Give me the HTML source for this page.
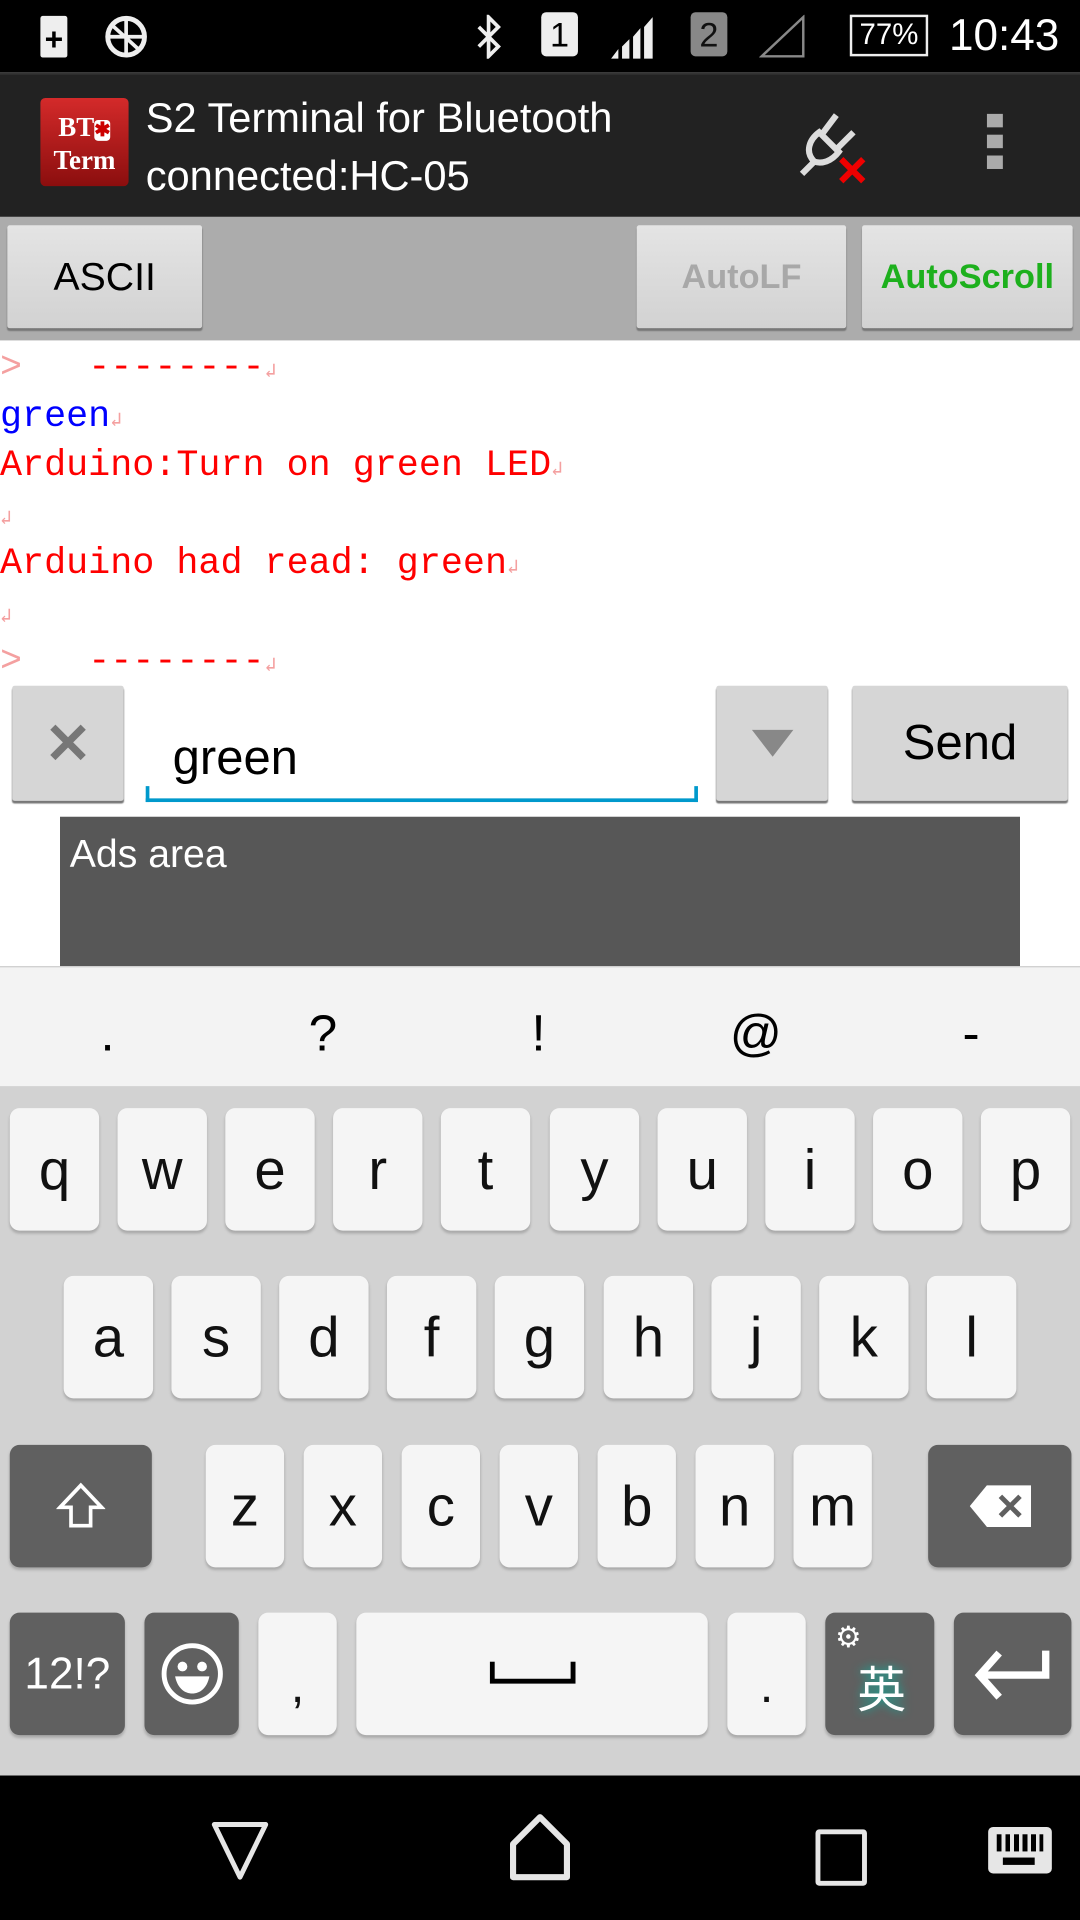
<!DOCTYPE html>
<html><head><meta charset="utf-8"><style>
html,body{margin:0;padding:0;width:1080px;height:1920px;overflow:hidden;background:#000}
#w{position:absolute;left:0;top:0;width:882px;height:1568px;transform:scale(1.22449);transform-origin:0 0;font-family:"Liberation Sans",sans-serif;background:#fff}
.a{position:absolute}
.btn{position:absolute;background:linear-gradient(#e4e4e4,#d2d2d2);border-radius:2px;box-shadow:0 2px 1px #777;display:flex;align-items:center;justify-content:center}
.t{position:absolute;left:0;font-family:"Liberation Mono",monospace;font-size:30px;line-height:40px;white-space:pre}
.k{position:absolute;background:#f5f5f5;border-radius:8px;box-shadow:0 2px 2px #aaa;display:flex;align-items:center;justify-content:center;font-size:46px;color:#111}
.d{background:#606060;color:#fff}
.rt{color:#f4a0a0;font-size:16px}
</style></head><body><div id="w">
<!-- status bar -->
<div class="a" style="left:0;top:0;width:882px;height:59px;background:#000"></div>
<div class="a" style="left:33px;top:13px;width:22px;height:34px;background:#eee;border-radius:2px"></div>
<div class="a" style="left:33px;top:13px;width:22px;height:34px;color:#000;font-size:26px;font-weight:bold;text-align:center;line-height:38px">+</div>
<svg class="a" style="left:84px;top:12px" width="38" height="36" viewBox="0 0 38 36"><circle cx="19" cy="18" r="15" fill="none" stroke="#eee" stroke-width="4"/><path d="M4 18h30M19 3v30M8 9l22 20" stroke="#eee" stroke-width="3"/></svg>
<svg class="a" style="left:386px;top:12px" width="26" height="36" viewBox="0 0 26 36"><path d="M5 10l16 16-8 8V2l8 8L5 26" fill="none" stroke="#eee" stroke-width="3"/></svg>
<div class="a" style="left:442px;top:10px;width:30px;height:36px;background:#eee;border-radius:4px;color:#000;font-size:28px;text-align:center;line-height:38px">1</div>
<svg class="a" style="left:497px;top:12px" width="40" height="36" viewBox="0 0 40 36"><path d="M2 36h6v-8zM11 36h6V20l-6 6zM20 36h6V11l-6 7zM29 36h7V2l-7 8z" fill="#eee"/></svg>
<div class="a" style="left:564px;top:10px;width:30px;height:36px;background:#888;border-radius:4px;color:#111;font-size:28px;text-align:center;line-height:38px">2</div>
<svg class="a" style="left:620px;top:12px" width="38" height="36" viewBox="0 0 38 36"><path d="M2 34h34V2z" fill="none" stroke="#888" stroke-width="2"/></svg>
<div class="a" style="left:694px;top:12px;width:60px;height:30px;border:2px solid #eee;color:#fff;font-size:24px;text-align:center;line-height:30px">77%</div>
<div class="a" style="left:775px;top:8px;color:#fff;font-size:36px">10:43</div>
<!-- action bar -->
<div class="a" style="left:0;top:59px;width:882px;height:118px;background:#222;border-top:2px solid #333"></div>
<div class="a" style="left:33px;top:80px;width:72px;height:72px;background:linear-gradient(#d42a2a,#8b0e0e);border-radius:4px;color:#fff;font-family:'Liberation Serif',serif;font-weight:bold;font-size:22px;line-height:24px;text-align:center;padding-top:12px;box-sizing:border-box">BT<span style="background:#fff;color:#c00;border-radius:3px;font-size:16px">&#x2731;</span><br>Term</div>
<div class="a" style="left:119px;top:74px;color:#fff;font-size:34px;line-height:47px">S2 Terminal for Bluetooth<br>connected:HC-05</div>
<svg class="a" style="left:645px;top:90px" width="70" height="62" viewBox="0 0 70 62"><path d="M10 52l10-10M20 42c-8-8-4-18 4-24l16 16c-6 8-14 10-20 8M26 20l12-16M38 32l14-14" fill="none" stroke="#ddd" stroke-width="5"/><path d="M42 40l18 18M60 40L42 58" stroke="#e00" stroke-width="5"/></svg>
<div class="a" style="left:806px;top:93px;width:13px;height:11px;background:#aaa;box-shadow:0 17px 0 #aaa,0 34px 0 #aaa"></div>
<!-- buttons bar -->
<div class="a" style="left:0;top:177px;width:882px;height:101px;background:#acacac"></div>
<div class="btn" style="left:6px;top:184px;width:159px;height:84px;font-size:32px;color:#000">ASCII</div>
<div class="btn" style="left:520px;top:184px;width:171px;height:84px;font-size:28px;color:#a8a8a8;font-weight:bold">AutoLF</div>
<div class="btn" style="left:704px;top:184px;width:172px;height:84px;font-size:28px;color:#1db01d;font-weight:bold">AutoScroll</div>
<!-- terminal -->
<div class="t" style="top:281px;color:#f00"><span style="color:#f4a0a0">&gt;</span>   --------<span class="rt">↲</span></div>
<div class="t" style="top:321px;color:#00f">green<span class="rt">↲</span></div>
<div class="t" style="top:361px;color:#f00">Arduino:Turn on green LED<span class="rt">↲</span></div>
<div class="t" style="top:401px;color:#f00"><span class="rt">↲</span></div>
<div class="t" style="top:441px;color:#f00">Arduino had read: green<span class="rt">↲</span></div>
<div class="t" style="top:481px;color:#f00"><span class="rt">↲</span></div>
<div class="t" style="top:521px;color:#f00"><span style="color:#f4a0a0">&gt;</span>   --------<span class="rt">↲</span></div>
<!-- input row -->
<div class="btn" style="left:10px;top:560px;width:91px;height:94px;background:#d6d6d6;font-size:46px;color:#777;font-weight:bold">✕</div>
<div class="a" style="left:119px;top:642px;width:445px;height:10px;border:3px solid #0099cc;border-top:none"></div>
<div class="a" style="left:141px;top:597px;font-size:40px;color:#000">green</div>
<div class="btn" style="left:585px;top:560px;width:91px;height:94px;background:#d6d6d6"><svg width="34" height="22"><path d="M0 0h34L17 22z" fill="#888"/></svg></div>
<div class="btn" style="left:696px;top:560px;width:176px;height:94px;background:#d6d6d6;font-size:40px;color:#000">Send</div>
<div class="a" style="left:49px;top:667px;width:784px;height:122px;background:#575757;color:#fff;font-size:32px;padding:12px 8px;box-sizing:border-box">Ads area</div>
<!-- keyboard -->
<div class="a" style="left:0;top:789px;width:882px;height:98px;background:#f3f3f3;border-top:1px solid #ccc"></div>
<div class="a" style="left:0;top:820px;width:882px;font-size:42px;color:#000">
<span class="a" style="left:82px">.</span><span class="a" style="left:252px">?</span><span class="a" style="left:434px">!</span><span class="a" style="left:596px">@</span><span class="a" style="left:786px">-</span></div>
<div class="a" style="left:0;top:887px;width:882px;height:563px;background:#d2d2d2"></div>
<div class="k" style="left:8px;top:905px;width:73px;height:100px">q</div>
<div class="k" style="left:96px;top:905px;width:73px;height:100px">w</div>
<div class="k" style="left:184px;top:905px;width:73px;height:100px">e</div>
<div class="k" style="left:272px;top:905px;width:73px;height:100px">r</div>
<div class="k" style="left:360px;top:905px;width:73px;height:100px">t</div>
<div class="k" style="left:449px;top:905px;width:73px;height:100px">y</div>
<div class="k" style="left:537px;top:905px;width:73px;height:100px">u</div>
<div class="k" style="left:625px;top:905px;width:73px;height:100px">i</div>
<div class="k" style="left:713px;top:905px;width:73px;height:100px">o</div>
<div class="k" style="left:801px;top:905px;width:73px;height:100px">p</div>
<div class="k" style="left:52px;top:1042px;width:73px;height:100px">a</div>
<div class="k" style="left:140px;top:1042px;width:73px;height:100px">s</div>
<div class="k" style="left:228px;top:1042px;width:73px;height:100px">d</div>
<div class="k" style="left:316px;top:1042px;width:73px;height:100px">f</div>
<div class="k" style="left:404px;top:1042px;width:73px;height:100px">g</div>
<div class="k" style="left:493px;top:1042px;width:73px;height:100px">h</div>
<div class="k" style="left:581px;top:1042px;width:73px;height:100px">j</div>
<div class="k" style="left:669px;top:1042px;width:73px;height:100px">k</div>
<div class="k" style="left:757px;top:1042px;width:73px;height:100px">l</div>
<div class="k d" style="left:8px;top:1180px;width:116px;height:100px"><svg width="40" height="40" viewBox="0 0 40 40"><path d="M20 3L3 21h9v15h16V21h9z" fill="none" stroke="#fff" stroke-width="3"/></svg></div>
<div class="k" style="left:168px;top:1180px;width:64px;height:100px">z</div>
<div class="k" style="left:248px;top:1180px;width:64px;height:100px">x</div>
<div class="k" style="left:328px;top:1180px;width:64px;height:100px">c</div>
<div class="k" style="left:408px;top:1180px;width:64px;height:100px">v</div>
<div class="k" style="left:488px;top:1180px;width:64px;height:100px">b</div>
<div class="k" style="left:568px;top:1180px;width:64px;height:100px">n</div>
<div class="k" style="left:648px;top:1180px;width:64px;height:100px">m</div>
<div class="k d" style="left:758px;top:1180px;width:117px;height:100px"><svg width="50" height="34" viewBox="0 0 50 34"><path d="M14 0h36v34H14L0 17z" fill="#fff"/><path d="M25 9l16 16M41 9L25 25" stroke="#606060" stroke-width="4"/></svg></div>
<div class="k d" style="left:8px;top:1317px;width:94px;height:100px;font-size:36px">12!?</div>
<div class="k d" style="left:118px;top:1317px;width:77px;height:100px"><svg width="52" height="52" viewBox="0 0 52 52"><circle cx="26" cy="26" r="23" fill="none" stroke="#fff" stroke-width="4"/><circle cx="18" cy="20" r="4" fill="#fff"/><circle cx="34" cy="20" r="4" fill="#fff"/><path d="M12 28h28c-2 10-8 14-14 14s-12-4-14-14z" fill="#fff"/></svg></div>
<div class="k" style="left:211px;top:1317px;width:64px;height:100px;font-size:40px;padding-top:20px;box-sizing:border-box">,</div>
<div class="k" style="left:291px;top:1317px;width:287px;height:100px"><svg width="70" height="20"><path d="M2 0v16h66V0" fill="none" stroke="#000" stroke-width="4"/></svg></div>
<div class="k" style="left:594px;top:1317px;width:64px;height:100px;font-size:40px;padding-top:20px;box-sizing:border-box">.</div>
<div class="k d" style="left:674px;top:1317px;width:89px;height:100px"><span class="a" style="left:8px;top:6px;font-size:24px">⚙</span><span class="a" style="left:26px;top:38px;font-size:40px;font-family:'Noto Sans CJK JP',sans-serif;text-shadow:0 0 8px #1a9;line-height:44px">英</span></div>
<div class="k d" style="left:779px;top:1317px;width:96px;height:100px"><svg width="66" height="46" viewBox="0 0 66 46"><path d="M60 4v20H8M22 6L6 24l16 18" fill="none" stroke="#fff" stroke-width="6"/></svg></div>
<!-- nav -->
<div class="a" style="left:0;top:1450px;width:882px;height:118px;background:#000"></div>
<svg class="a" style="left:170px;top:1485px" width="52" height="52" viewBox="0 0 52 52"><path d="M5 5h42L26 48z" fill="none" stroke="#e6e6e6" stroke-width="4" stroke-linejoin="round"/></svg>
<svg class="a" style="left:413px;top:1480px" width="56" height="56" viewBox="0 0 56 56"><path d="M28 4L6 26v27h44V26z" fill="none" stroke="#e6e6e6" stroke-width="5" stroke-linejoin="round"/></svg>
<div class="a" style="left:666px;top:1494px;width:34px;height:38px;border:4px solid #e6e6e6;border-radius:3px"></div>
<div class="a" style="left:807px;top:1492px;width:52px;height:38px;background:#e6e6e6;border-radius:4px"></div>
<div class="a" style="left:814px;top:1498px;width:38px;height:14px;background:repeating-linear-gradient(90deg,#000 0 4px,transparent 4px 7px)"></div>
<div class="a" style="left:819px;top:1517px;width:26px;height:6px;background:#000"></div>
</div></body></html>
